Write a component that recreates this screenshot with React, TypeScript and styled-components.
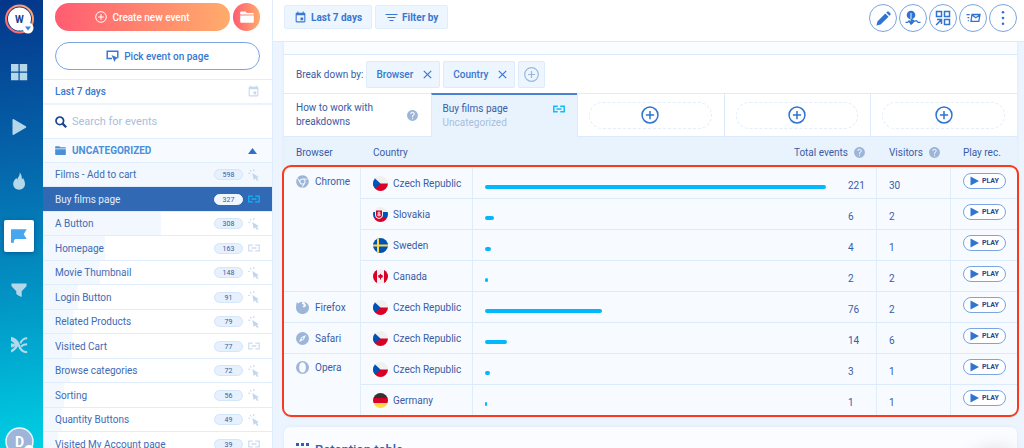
import React from "react";
import styled, { createGlobalStyle, css } from "styled-components";
import { MdEvent, MdHelp } from "react-icons/md";
import { FaChrome } from "react-icons/fa";

const Global = createGlobalStyle`
  * { box-sizing: border-box; }
  body { margin: 0; background: #ebf4ff; }
  body, button, input { font-family: Roboto, "Liberation Sans", sans-serif; font-size: 10px; }
  button { cursor: pointer; padding: 0; }
  svg { display: block; flex: none; }
`;

const Page = styled.div`
  display: flex;
  height: 100vh;
  overflow: hidden;
  color: #3a5ba6;
`;

/* ---------- navigation rail ---------- */

const Rail = styled.aside`
  display: flex;
  flex: none;
  flex-direction: column;
  align-items: center;
  width: 43px;
  padding: 5px 5px 0 0;
  background: linear-gradient(172deg, #04368a 0%, #0568ad 38%, #0294c4 66%, #00cfe4 100%);
`;

const Workspace = styled.button`
  position: relative;
  width: 29px;
  height: 29px;
  border: 0;
  background: none;
`;

const RailNav = styled.nav`
  display: flex;
  flex: 1;
  flex-direction: column;
  justify-content: space-between;
  padding: 22px 0 66px;
`;

const RailLink = styled.a<{ $active?: boolean }>`
  display: flex;
  align-items: center;
  justify-content: center;
  width: 30px;
  height: 32px;
  border-radius: 2px;
  color: ${(p) => (p.$active ? "#46a6f0" : "#b4d7ea")};
  ${(p) => p.$active && css`
    background: #fff;
    box-shadow: 0 1px 4px rgba(0, 40, 110, 0.5);
  `}
`;

const Account = styled.button`
  flex: none;
  width: 29px;
  height: 29px;
  margin-bottom: -8px;
  border: 0;
  background: none;
`;

/* ---------- events sidebar ---------- */

const Sidebar = styled.aside`
  display: flex;
  flex: none;
  flex-direction: column;
  width: 230px;
  border-right: 1px solid #dfecfb;
  background: #fff;
  overflow: hidden;
`;

const Actions = styled.div`
  display: grid;
  grid-template-columns: 1fr 27px;
  gap: 11px 3px;
  padding: 3px 12px 9px;
`;

const PillButton = styled.button<{ $primary?: boolean }>`
  display: flex;
  align-items: center;
  justify-content: center;
  gap: 5px;
  height: 28px;
  border: 1px solid #7aa5e0;
  border-radius: 14px;
  background: #fff;
  color: #3878d0;
  font-weight: 500;
  ${(p) => p.$primary
    ? css`
        border: 0;
        background: linear-gradient(90deg, #ff5c72, #ffac6b);
        color: #fff;
      `
    : css`grid-column: 1 / -1;`}
`;

const Range = styled.button`
  display: flex;
  flex: none;
  align-items: center;
  justify-content: space-between;
  height: 26px;
  padding: 0 12px;
  border: 0;
  border-top: 1px solid #e0edfd;
  border-bottom: 2px solid #eaf3fe;
  background: #fff;
  color: #3878d0;
  font-weight: 500;
`;

const Search = styled.label`
  display: flex;
  flex: none;
  align-items: center;
  gap: 5px;
  height: 33px;
  padding: 0 12px;
  color: #17428f;
`;

const SearchInput = styled.input`
  flex: 1;
  min-width: 0;
  padding: 0;
  border: 0;
  outline: 0;
  color: #3a5ba6;
  font-size: 11px;
  &::placeholder { color: #a9bedb; opacity: 1; }
`;

const Group = styled.button`
  display: flex;
  flex: none;
  align-items: center;
  gap: 6px;
  height: 25px;
  padding: 0 15px 0 12px;
  border: 0;
  border-top: 1px solid #e0edfd;
  border-bottom: 1px solid #e0edfd;
  background: #f7fbff;
  color: #4a8fd8;
  font-weight: 700;
  & > span { flex: 1; text-align: left; }
`;

const EventList = styled.ul`
  margin: 0;
  padding: 0;
  list-style: none;
`;

const EventItem = styled.li`
  display: flex;
  height: 24px;
  &:nth-child(even) { height: 25px; }
`;

const EventLink = styled.a<{ $active?: boolean }>`
  display: flex;
  flex: 1;
  align-items: center;
  gap: 5px;
  padding: 0 12px;
  border-bottom: 1px solid #e0edfd;
  background: ${(p) => (p.$active ? "#3269b5" : "#fff linear-gradient(#f2f8fd, #f2f8fd) no-repeat")};
  color: ${(p) => (p.$active ? "#e3eefb" : "#3e6bb6")};
  text-decoration: none;
  & > span:first-child { flex: 1; }
`;

const Count = styled.span<{ $active?: boolean }>`
  width: 29px;
  height: 11px;
  border: 1px solid ${(p) => (p.$active ? "#f0f6fe" : "#d3e6fa")};
  border-radius: 6px;
  background: ${(p) => (p.$active ? "#f0f6fe" : "#e6f1fd")};
  color: #3a5c9c;
  font-size: 7px;
  line-height: 10px;
  text-align: center;
`;

/* ---------- main area ---------- */

const Main = styled.main`
  flex: 1;
  min-width: 0;
  background: #ebf4ff;
`;

const Toolbar = styled.header`
  display: flex;
  align-items: flex-start;
  gap: 3px;
  height: 42px;
  padding: 5px 7px 0 11px;
  border-bottom: 1px solid #dcebfd;
  background: #fff;
`;

const FilterButton = styled.button`
  display: flex;
  align-items: center;
  gap: 4px;
  height: 24px;
  padding: 0 9px;
  border: 1px solid #e0edfc;
  border-radius: 2px;
  background: #edf5ff;
  color: #3878d0;
  font-weight: 700;
`;

const RoundActions = styled.div`
  display: flex;
  gap: 2px;
  margin: -1px 0 0 auto;
`;

const RoundButton = styled.button`
  display: flex;
  align-items: center;
  justify-content: center;
  width: 28px;
  height: 28px;
  border: 1px solid #7aa5e0;
  border-radius: 50%;
  background: #fff;
  color: #2f74d0;
`;

const Card = styled.section`
  margin: 0 7px 11px 11px;
  padding-top: 12px;
  border-radius: 0 0 8px 8px;
  background: #fafcff;
  box-shadow: 0 1px 3px #d5e5f8;
`;

const Breakdown = styled.div`
  display: flex;
  align-items: center;
  gap: 3px;
  height: 40px;
  padding: 0 12px;
  border-top: 1px solid #d8eafc;
  border-bottom: 1px solid #e2eaf6;
  background: #fff;
`;

const Chip = styled.button`
  display: flex;
  align-items: center;
  justify-content: center;
  gap: 10px;
  min-width: 27px;
  height: 27px;
  border: 1px solid #deebfb;
  border-radius: 2px;
  background: #edf5ff;
  color: #3878d0;
  font-weight: 500;
`;

const FieldChip = styled(Chip)`
  padding: 0 7px 0 9px;
`;

const Tabs = styled.div`
  display: grid;
  grid-template-columns: repeat(5, 1fr);
  height: 43px;
`;

const Tab = styled.div<{ $active?: boolean }>`
  display: flex;
  align-items: center;
  justify-content: space-between;
  padding: 0 12px 0 11px;
  border-left: 1px solid #dcebfb;
  border-bottom: 1px solid #dcebfb;
  background: #fff;
  line-height: 14px;
  &:first-child {
    padding-left: 12px;
    border-left: 0;
  }
  ${(p) => p.$active && css`
    align-items: flex-start;
    padding-top: 7px;
    margin-top: -1px;
    border-top: 2px solid #4a82d6;
    border-bottom: 0;
    background: #e9f3fe;
  `}
`;

const Muted = styled.div`
  color: #a9bedb;
`;

const AddTab = styled.button`
  display: flex;
  flex: 1;
  align-items: center;
  justify-content: center;
  height: 27px;
  border: 1px dashed #e3eefc;
  border-radius: 14px;
  background: #fff;
  color: #2f74d0;
`;

const TableBox = styled.div`
  position: relative;
`;

const Highlight = styled.div`
  position: absolute;
  inset: 28px -2px -1px -2px;
  border: 2px solid #f93a20;
  border-radius: 9px;
  pointer-events: none;
`;

const Table = styled.table`
  width: 100%;
  table-layout: fixed;
  border-collapse: separate;
  border-spacing: 0;
`;

const Th = styled.th<{ $end?: boolean }>`
  height: 31px;
  padding: 0 11px 0 12px;
  background: #e9f3fe;
  font-weight: 400;
  text-align: left;
  & > div {
    display: flex;
    align-items: center;
    gap: 5px;
    justify-content: ${(p) => (p.$end ? "flex-end" : "flex-start")};
    white-space: nowrap;
  }
`;

const Td = styled.td<{ $rule?: boolean; $low?: boolean; $top?: boolean }>`
  height: 31px;
  padding: 0 0 0 12px;
  border-right: ${(p) => (p.$rule ? "1px solid #e0eefc" : "0")};
  border-bottom: 1px solid #dbebfb;
  background: #f7fbff;
  ${(p) => p.$low && css`padding-top: 4px;`}
  ${(p) => p.$top && css`
    padding-top: 7px;
    vertical-align: top;
  `}
`;

const Named = styled.div<{ $gap: number }>`
  display: flex;
  align-items: center;
  gap: ${(p) => p.$gap}px;
  white-space: nowrap;
`;

const Track = styled.div`
  margin: 4px 10px 0 0;
`;

const Bar = styled.div`
  height: 4px;
  border-radius: 2px;
  background: #00b8fb;
`;

const PlayButton = styled.button`
  display: flex;
  align-items: center;
  gap: 3px;
  height: 16px;
  margin-bottom: 4px;
  padding: 0 6px;
  border: 1px solid #7aa5e0;
  border-radius: 8px;
  background: #fff;
  color: #1f4591;
  font-size: 7px;
  font-weight: 700;
`;

const Retention = styled.section`
  display: flex;
  align-items: center;
  gap: 6px;
  height: 44px;
  margin: 0 7px 0 11px;
  padding: 0 12px;
  border-radius: 6px;
  background: #fafcff;
  box-shadow: 0 0 3px #dce9f8;
  color: #2f5fb0;
`;

const Heading = styled.h2`
  margin: 0;
  font-size: 13px;
  font-weight: 500;
`;

const ChatLauncher = styled.div`
  position: fixed;
  right: 8px;
  bottom: -46px;
  width: 42px;
  height: 42px;
  border-radius: 50%;
  background: #fff;
  box-shadow: 0 0 22px rgba(0, 0, 0, 0.2);
`;

/* ---------- icons ---------- */

const PlusCircle = ({ size, stroke = 2 }: { size: number; stroke?: number }) => (
  <svg width={size} height={size} viewBox="0 0 24 24" fill="none" stroke="currentColor" strokeWidth={stroke} aria-hidden>
    <circle cx="12" cy="12" r="10.6" />
    <path d="M12 6.5v11M6.5 12h11" />
  </svg>
);

const Folder = ({ w }: { w: number }) => (
  <svg width={w} height={w} viewBox="0 0 13 13" fill="currentColor" aria-hidden>
    <path d="M1 1.5h4.2l1.2 1.3H12a.8.8 0 0 1 .8.8v.6H.2V2.3a.8.8 0 0 1 .8-.8zM.2 5h12.6v6a.9.9 0 0 1-.9.9H1.1a.9.9 0 0 1-.9-.9z" />
  </svg>
);

const PickIcon = () => (
  <svg width="13" height="12" viewBox="0 0 13 12" fill="none" stroke="currentColor" strokeWidth="1.5" aria-hidden>
    <path d="M6 8.600H1.200V1.200h10.600v6.500" />
    <path d="M5.500 5l7 3-2.600.9-1.400 3z" fill="currentColor" stroke="none" />
  </svg>
);

const SearchIcon = () => (
  <svg width="12" height="12" viewBox="0 0 12 12" fill="none" stroke="currentColor" aria-hidden>
    <circle cx="4.800" cy="4.800" r="3.800" strokeWidth="1.700" />
    <path d="M7.600 7.600l3.600 3.600" strokeWidth="2.200" />
  </svg>
);

const FilterIcon = () => (
  <svg width="13" height="9" viewBox="0 0 13 9" fill="none" stroke="currentColor" strokeWidth="1.200" aria-hidden>
    <path d="M.5 1.500h12M2.500 4.500h8M4.500 7.500h4" />
  </svg>
);

const CloseIcon = () => (
  <svg width="9" height="9" viewBox="0 0 9 9" fill="none" stroke="currentColor" strokeWidth="1.200" aria-hidden>
    <path d="M.8.8l7.400 7.400M8.200.8L.8 8.200" />
  </svg>
);

const LinkIcon = ({ color }: { color: string }) => (
  <svg width="12" height="8" viewBox="0 0 12 8" fill="none" stroke={color} strokeWidth="1.300" aria-hidden>
    <path d="M4.800 1.200H.8v5.600h4M7.200 1.200h4v5.600h-4M3.500 4h5" />
  </svg>
);

const ClickIcon = () => (
  <svg width="12" height="12" viewBox="0 0 12 12" fill="#c4d6ec" aria-hidden>
    <path d="M4.300 4l6.700 4.300-2.200.5 1.700 2.400-1.400.8-1.600-2.500-1.800 1.500z" />
    <path d="M2.200 1l1.100 1.500M6 .2l-.3 1.900M.3 4.300h1.900" stroke="#c4d6ec" strokeWidth="1.100" />
  </svg>
);

const HelpIcon = () => <MdHelp size={13} color="#9db6d8" aria-hidden />;

const RoundClip = ({ id, children }: { id: string; children: React.ReactNode }) => (
  <svg width="15" height="15" viewBox="0 0 30 30" aria-hidden>
    <clipPath id={id}><circle cx="15" cy="15" r="15" /></clipPath>
    <g clipPath={`url(#${id})`}>{children}</g>
  </svg>
);

const flagShapes: Record<string, React.ReactNode> = {
  "Czech Republic": (
    <>
      <path d="M0 0h30v15H0z" fill="#f0f0f0" />
      <path d="M0 15h30v15H0z" fill="#d80027" />
      <path d="M3 4l12 11L3 26H0V4z" fill="#0052b4" />
    </>
  ),
  Slovakia: (
    <>
      <path d="M0 0h30v10H0z" fill="#f0f0f0" />
      <path d="M0 10h30v10H0z" fill="#0052b4" />
      <path d="M0 20h30v10H0z" fill="#d80027" />
      <path d="M4 7h16v9c0 5-4 7-8 8-4-1-8-3-8-8z" fill="#f0f0f0" />
      <path d="M6 7h12v9c0 3-3 5-6 6-3-1-6-3-6-6z" fill="#d80027" />
      <path d="M11 9h2v2h2v2h-2v2h3v2h-3v2h-2v-2H8v-2h3v-2H9v-2h2z" fill="#f0f0f0" />
    </>
  ),
  Sweden: (
    <>
      <path d="M0 0h30v30H0z" fill="#0052b4" />
      <path d="M8 0h4v30H8zM0 13h30v4H0z" fill="#ffda44" />
    </>
  ),
  Canada: (
    <>
      <path d="M0 0h30v30H0z" fill="#f0f0f0" />
      <path d="M0 0h8v30H0zM22 0h8v30h-8z" fill="#d80027" />
      <path d="M15 9l2 3 3 1-1 4-3 1v3h-2v-3l-3-1-1-4 3-1z" fill="#d80027" />
    </>
  ),
  Germany: (
    <>
      <path d="M0 0h30v10H0z" fill="#333" />
      <path d="M0 10h30v10H0z" fill="#d80027" />
      <path d="M0 20h30v10H0z" fill="#ffda44" />
    </>
  ),
};

const browserIcons: Record<string, React.ReactNode> = {
  Chrome: <FaChrome size={13} color="#9db6d8" />,
  Firefox: (
    <svg width="13" height="13" viewBox="0 0 26 26" aria-hidden>
      <path d="M1.500 2l3 3C7 2.500 10 1 13.500 1.500 12 3 11.500 4.500 12 6l4 1.500c0 1.500-1.500 2-3 3 .5 2 3 2.500 5 1.500 2.500-1.500 2.500-5 0-7l-2-3c5 .5 10 4.500 10 11.500 0 7-5.800 12.500-13 12.500S0 20.500 0 13.500C0 9 1 5.500 1.500 2z" fill="#9db6d8" />
    </svg>
  ),
  Safari: (
    <svg width="13" height="13" viewBox="0 0 26 26" aria-hidden>
      <circle cx="13" cy="13" r="13" fill="#9db6d8" />
      <path d="M20 6l-4.500 9.500L6 20l4.500-9.500z" fill="#f7fbff" />
      <circle cx="13" cy="13" r="1.800" fill="#9db6d8" />
    </svg>
  ),
  Opera: (
    <svg width="13" height="13" viewBox="0 0 26 26" aria-hidden>
      <path fillRule="evenodd" fill="#9db6d8" d="M13 0a13 13 0 1 0 0 26 13 13 0 0 0 0-26zm0 2.500c4.300 0 6.800 4.700 6.800 10.500S17.300 23.500 13 23.500 6.200 18.800 6.200 13 8.700 2.500 13 2.500z" />
    </svg>
  ),
};

const railIcons: { label: string; active?: boolean; art: React.ReactNode }[] = [
  { label: "Dashboard", art: <path d="M0 0h7.500v7.500H0zM8.700 0h7.500v7.500H8.700zM0 8.700h7.500v7.500H0zM8.700 8.700h7.500v7.500H8.700z" /> },
  { label: "Recordings", art: <path d="M1.500.8C1.500 0 2.200-.2 2.800.2l12 7c.6.400.6 1.100 0 1.500l-12 7.100c-.6.400-1.300.1-1.300-.6z" /> },
  { label: "Heatmaps", art: <path d="M8.500-.5c.6 2.300-.3 3.600-1.500 5C6.700 5.600 6.500 6 6.300 6.600 5.900 6.100 5.600 5.700 5.300 5 3.300 7 2.200 9 2.200 11c0 3.500 2.700 5.700 6 5.700s5.800-2.300 5.800-5.700c0-2.600-1.200-4.300-2-6.200-.3.700-.6 1.200-1.100 1.600C10.800 3.600 10.500 1 8.500-.5z" /> },
  { label: "Events", active: true, art: <path d="M0 1.300h15.700l-3 4.900 3 4.900H5.500c-1.300 0-2.300.6-2.600 1.900v1.700H0z" /> },
  { label: "Funnels", art: <path d="M.5 1.500h15v2.800l-4.800 5v5.700l-3-1.200-2.400-1.700V9.300l-4.800-5z" /> },
  {
    label: "Crossroads",
    art: (
      <>
        <path d="M0 0c5 .5 7.500 4 8.800 7.500C10.500 12 12.500 14 16.200 14.200v2C10 16 8.500 12.500 7 9.200 5.500 12 3 14.500 0 15.500v-2.600c1.800-1 3.300-2.400 4.200-4.200C3 9.600 1.500 10.300 0 10.500V6.300c1.200 0 2.400.3 3.500.9C2.700 5.500 1.500 4.500 0 4z" />
        <path d="M16.200 1.200C12 1.200 10.500 3.500 9.300 6.300M16.200 7.200c-3 0-5 .8-6.200 2.600" fill="none" stroke="currentColor" strokeWidth="2" />
      </>
    ),
  },
];

/* ---------- data ---------- */

const events: { name: string; count: number; link?: boolean; active?: boolean }[] = [
  { name: "Films - Add to cart", count: 598 },
  { name: "Buy films page", count: 327, link: true, active: true },
  { name: "A Button", count: 308 },
  { name: "Homepage", count: 163, link: true },
  { name: "Movie Thumbnail", count: 148 },
  { name: "Login Button", count: 91 },
  { name: "Related Products", count: 79 },
  { name: "Visited Cart", count: 77, link: true },
  { name: "Browse categories", count: 72 },
  { name: "Sorting", count: 56 },
  { name: "Quantity Buttons", count: 49 },
  { name: "Visited My Account page", count: 39, link: true },
];

const browsers: { name: string; rows: [string, number, number][] }[] = [
  { name: "Chrome", rows: [["Czech Republic", 221, 30], ["Slovakia", 6, 2], ["Sweden", 4, 1], ["Canada", 2, 2]] },
  { name: "Firefox", rows: [["Czech Republic", 76, 2]] },
  { name: "Safari", rows: [["Czech Republic", 14, 6]] },
  { name: "Opera", rows: [["Czech Republic", 3, 1], ["Germany", 1, 1]] },
];

const maxEvents = events[0].count;
const maxTotal = 221;

export default function App() {
  return (
    <Page>
      <Global />
      <Rail>
        <Workspace aria-label="Workspace">
          <svg width="29" height="29" viewBox="0 0 29 29" overflow="visible">
            <defs>
              <linearGradient id="ring" x1="0" y1="1" x2="1" y2="0">
                <stop offset="0" stopColor="#ff5c72" />
                <stop offset="1" stopColor="#ffb36b" />
              </linearGradient>
            </defs>
            <circle cx="14.500" cy="14" r="13.500" fill="#12408d" stroke="url(#ring)" strokeWidth="2" />
            <circle cx="14.500" cy="14" r="11.500" fill="#fff" />
            <text x="14.300" y="17.500" textAnchor="middle" fontSize="10" fontWeight="700" fill="#12408d">W</text>
            <circle cx="23" cy="23" r="5.500" fill="#fff" />
            <path d="M20 21.500h6l-3 4z" fill="#3c84dc" />
          </svg>
        </Workspace>
        <RailNav>
          {railIcons.map((i) => (
            <RailLink key={i.label} href="#" aria-label={i.label} $active={i.active}>
              <svg width="16" height="16" viewBox="0 0 16 16" fill="currentColor" overflow="visible">{i.art}</svg>
            </RailLink>
          ))}
        </RailNav>
        <Account aria-label="Account">
          <svg width="29" height="29" viewBox="0 0 29 29">
            <circle cx="14.500" cy="14.500" r="13.500" fill="#9cb5d8" stroke="#eaf5fc" strokeWidth="1.500" />
            <text x="14.500" y="19.500" textAnchor="middle" fontSize="14" fontWeight="700" fill="#fff">D</text>
            <circle cx="24" cy="23" r="5" fill="#fff" />
          </svg>
        </Account>
      </Rail>

      <Sidebar>
        <Actions>
          <PillButton $primary><PlusCircle size={12} />Create new event</PillButton>
          <PillButton $primary aria-label="New folder"><Folder w={14} /></PillButton>
          <PillButton><PickIcon />Pick event on page</PillButton>
        </Actions>
        <Range>Last 7 days<MdEvent size={13} color="#c6d8ee" /></Range>
        <Search>
          <SearchIcon />
          <SearchInput type="text" placeholder="Search for events" aria-label="Search for events" />
        </Search>
        <Group>
          <Folder w={11} />
          <span>UNCATEGORIZED</span>
          <svg width="9" height="6" viewBox="0 0 9 6"><path d="M4.500 0L9 6H0z" fill="#3070cc" /></svg>
        </Group>
        <EventList>
          {events.map((e) => (
            <EventItem key={e.name}>
              <EventLink
                href="#"
                $active={e.active}
                style={e.active ? undefined : { backgroundSize: `${(e.count / maxEvents) * 100}% 100%` }}
              >
                <span>{e.name}</span>
                <Count $active={e.active}>{e.count}</Count>
                {e.link ? <LinkIcon color={e.active ? "#12b4f6" : "#cfddee"} /> : <ClickIcon />}
              </EventLink>
            </EventItem>
          ))}
        </EventList>
      </Sidebar>

      <Main>
        <Toolbar>
          <FilterButton><MdEvent size={13} />Last 7 days</FilterButton>
          <FilterButton><FilterIcon />Filter by</FilterButton>
          <RoundActions>
            <RoundButton aria-label="Edit">
              <svg width="15" height="15" viewBox="0 0 15 15" fill="currentColor">
                <path d="M.5 14.500l.9-4.100 7.900-7.900 3.200 3.200-7.900 7.900zM10.200 1.600l.9-.8c.5-.5 1.200-.5 1.700 0l1.500 1.500c.5.500.5 1.200 0 1.700l-.9.800z" />
              </svg>
            </RoundButton>
            <RoundButton aria-label="Define event">
              <svg width="16" height="16" viewBox="0 0 16 16" fill="currentColor">
                <circle cx="6" cy="5" r="4.300" />
                <path d="M5.100 3.500h1.800v6H5.100z" fill="#fff" />
                <path d="M5.500 4h1v5l2.800 1-1.600 3.500H5.200L3.500 11l2 .4z" />
                <path d="M.5 12.300h2.300l1.200-1.500 2 3.500 3-3 2.500-.6 1.500 1.600h2.500" fill="none" stroke="currentColor" strokeWidth="1.200" />
              </svg>
            </RoundButton>
            <RoundButton aria-label="Add to dashboard">
              <svg width="16" height="16" viewBox="0 0 16 16" fill="none" stroke="currentColor" strokeWidth="1.500">
                <path d="M1.500 1.500h5v5h-5zM9.500 1.500h5v5h-5zM9.500 9.500h5v5h-5zM2 9.500h4.500V14M6 10l-4.800 5" />
              </svg>
            </RoundButton>
            <RoundButton aria-label="Send by email">
              <svg width="15" height="10" viewBox="0 0 15 10" fill="none" stroke="currentColor" strokeWidth="1.300">
                <path d="M6 1.500h8L12.800 8.300H5zM6.200 2l3.600 2.800L13.800 2" />
                <path d="M.5 1.700h3.200M1.500 4.700h1.800M1.800 7.700h1" />
              </svg>
            </RoundButton>
            <RoundButton aria-label="More">
              <svg width="4" height="16" viewBox="0 0 4 16" fill="currentColor">
                <circle cx="2" cy="2.200" r="1.300" /><circle cx="2" cy="8" r="1.300" /><circle cx="2" cy="13.800" r="1.300" />
              </svg>
            </RoundButton>
          </RoundActions>
        </Toolbar>

        <Card>
          <Breakdown>
            <span>Break down by:</span>
            <FieldChip>Browser<CloseIcon /></FieldChip>
            <FieldChip>Country<CloseIcon /></FieldChip>
            <Chip aria-label="Add breakdown">
              <svg width="15" height="15" viewBox="0 0 15 15" fill="none" stroke="#9db6d8" strokeWidth="1.200">
                <circle cx="7.500" cy="7.500" r="6.800" />
                <path d="M7.500 4v7M4 7.500h7" />
              </svg>
            </Chip>
          </Breakdown>
          <Tabs>
            <Tab><div>How to work with<br />breakdowns</div><HelpIcon /></Tab>
            <Tab $active>
              <div>Buy films page<Muted>Uncategorized</Muted></div>
              <svg width="12" height="14" viewBox="0 -3 12 14" fill="none" stroke="#12bdf8" strokeWidth="1.500">
                <path d="M4.800 1.200H.8v5.600h4M7.200 1.200h4v5.600h-4M3.500 4h5" />
              </svg>
            </Tab>
            {[1, 2, 3].map((n) => (
              <Tab key={n}><AddTab aria-label="Add event"><PlusCircle size={18} /></AddTab></Tab>
            ))}
          </Tabs>
          <TableBox>
            <Table>
              <colgroup>
                <col width="77" /><col width="112" /><col /><col width="41" /><col width="74" /><col width="66" />
              </colgroup>
              <thead>
                <tr>
                  <Th>Browser</Th>
                  <Th>Country</Th>
                  <Th colSpan={2} $end><div>Total events<HelpIcon /></div></Th>
                  <Th><div>Visitors<HelpIcon /></div></Th>
                  <Th><div>Play rec.</div></Th>
                </tr>
              </thead>
              <tbody>
                {browsers.map((b) =>
                  b.rows.map(([country, total, visitors], i) => (
                    <tr key={b.name + country}>
                      {i === 0 && (
                        <Td rowSpan={b.rows.length} $rule $top={b.rows.length > 1}>
                          <Named $gap={6}>{browserIcons[b.name]}{b.name}</Named>
                        </Td>
                      )}
                      <Td $rule>
                        <Named $gap={5}>
                          <RoundClip id={`flag-${b.name}-${i}`}>{flagShapes[country]}</RoundClip>
                          {country}
                        </Named>
                      </Td>
                      <Td $low><Track><Bar style={{ width: `${(total / maxTotal) * 100}%` }} /></Track></Td>
                      <Td $rule $low>{total}</Td>
                      <Td $rule $low>{visitors}</Td>
                      <Td>
                        <PlayButton>
                          <svg width="9" height="10" viewBox="0 0 9 10"><path d="M.5.500L9 5 .5 9.500z" fill="#2f74d0" /></svg>
                          PLAY
                        </PlayButton>
                      </Td>
                    </tr>
                  ))
                )}
              </tbody>
            </Table>
            <Highlight />
          </TableBox>
        </Card>

        <Retention>
          <svg width="13" height="13" viewBox="0 0 13 13" fill="currentColor">
            <path d="M0 0h3v3H0zM5 0h3v3H5zM10 0h3v3h-3zM0 5h3v3H0zM5 5h3v3H5zM10 5h3v3h-3zM0 10h3v3H0zM5 10h3v3H5z" />
          </svg>
          <Heading>Retention table</Heading>
        </Retention>
      </Main>
      <ChatLauncher />
    </Page>
  );
}
